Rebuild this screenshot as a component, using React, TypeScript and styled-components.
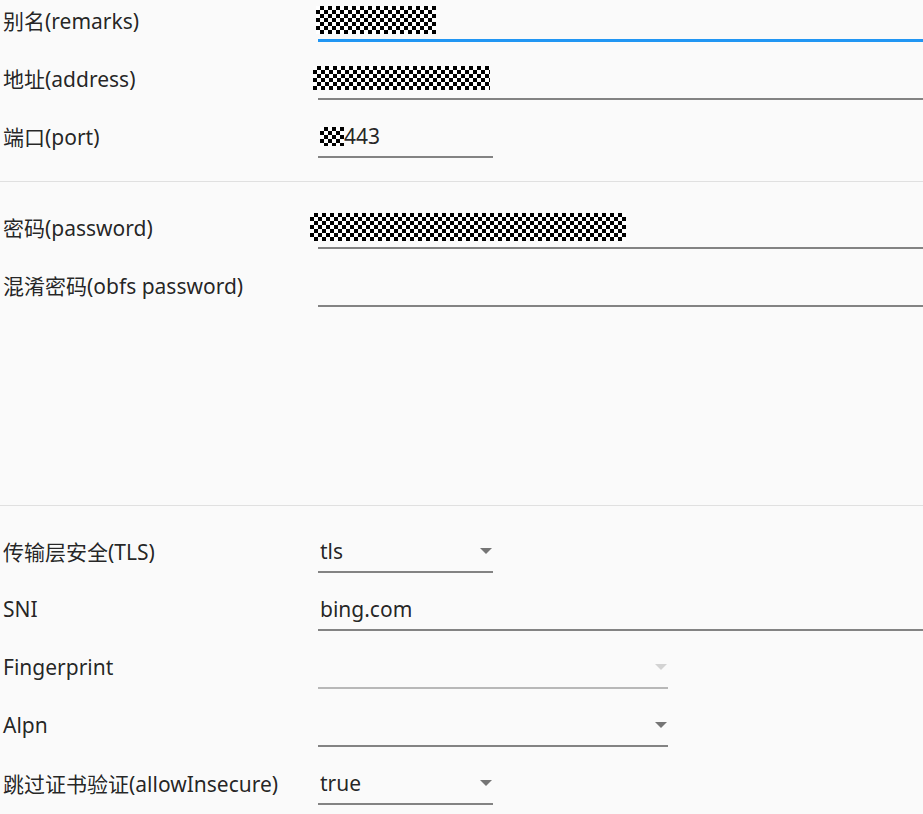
import React from "react";
import styled, { createGlobalStyle } from "styled-components";

const GlobalStyle = createGlobalStyle`
  html, body { margin: 0; padding: 0; background: #fafafa; }
  body { font-family: "Noto Sans", "Noto Sans CJK SC", sans-serif; overflow: hidden; }
`;

const Page = styled.div`
  margin-top: -25px;
  width: 923px;
`;

const Section = styled.section<{ $spacer?: number }>`
  padding: 16px 0 ${(p) => 16 + (p.$spacer ?? 0)}px;
  border-bottom: 1px solid #e0e0e0;
  &:last-child { border-bottom: none; }
`;

const Row = styled.div`
  display: grid;
  grid-template-columns: 318px 1fr;
  height: 58px;
  align-items: center;
`;

const Label = styled.div`
  padding-left: 3px;
  font-size: 21px;
  color: rgba(0, 0, 0, 0.87);
  white-space: nowrap;
`;

const Field = styled.div<{ $width?: number; $focused?: boolean; $disabled?: boolean }>`
  align-self: start;
  position: relative;
  box-sizing: border-box;
  height: 51px;
  width: ${(p) => (p.$width ? `${p.$width}px` : "100%")};
  padding-top: 9px;
  display: flex;
  align-items: center;
  border-bottom: ${(p) =>
    p.$focused ? "3px solid #2196f3" : p.$disabled ? "2px solid #b8b8b8" : "2px solid #838383"};
  font-size: 21px;
  color: rgba(0, 0, 0, 0.87);
`;

const Value = styled.span`
  padding-left: 2px;
  white-space: nowrap;
`;

const Redact = styled.span<{ $w: number; $h: number; $shift?: number }>`
  display: inline-block;
  width: ${(p) => p.$w}px;
  height: ${(p) => p.$h}px;
  margin-left: ${(p) => p.$shift ?? 0}px;
  background: repeating-conic-gradient(#000 0 25%, #fff 0 50%) 0 0 / 8px 8px;
`;

const Arrow = styled.svg<{ $disabled?: boolean }>`
  position: absolute;
  right: 1px;
  top: 26px;
  width: 12px;
  height: 6px;
  fill: ${(p) => (p.$disabled ? "#d3d3d3" : "#757575")};
`;

const Caret = ({ disabled }: { disabled?: boolean }) => (
  <Arrow $disabled={disabled} viewBox="0 0 12 6">
    <path d="M0 0 L12 0 L6 6 Z" />
  </Arrow>
);

export default function App() {
  return (
    <>
      <GlobalStyle />
      <Page>
        <Section>
          <Row>
            <Label>别名(remarks)</Label>
            <Field $focused>
              <Redact $w={120} $h={28} $shift={-2} />
            </Field>
          </Row>
          <Row>
            <Label>地址(address)</Label>
            <Field>
              <Redact $w={177} $h={24} $shift={-5} />
            </Field>
          </Row>
          <Row>
            <Label>端口(port)</Label>
            <Field $width={175}>
              <Redact $w={24} $h={19} $shift={2} />
              <span>443</span>
            </Field>
          </Row>
        </Section>
        <Section $spacer={175}>
          <Row>
            <Label>密码(password)</Label>
            <Field>
              <Redact $w={316} $h={28} $shift={-8} />
            </Field>
          </Row>
          <Row>
            <Label>混淆密码(obfs password)</Label>
            <Field />
          </Row>
        </Section>
        <Section>
          <Row>
            <Label>传输层安全(TLS)</Label>
            <Field $width={175}>
              <Value>tls</Value>
              <Caret />
            </Field>
          </Row>
          <Row>
            <Label>SNI</Label>
            <Field>
              <Value>bing.com</Value>
            </Field>
          </Row>
          <Row>
            <Label>Fingerprint</Label>
            <Field $width={350} $disabled>
              <Caret disabled />
            </Field>
          </Row>
          <Row>
            <Label>Alpn</Label>
            <Field $width={350}>
              <Caret />
            </Field>
          </Row>
          <Row>
            <Label>跳过证书验证(allowInsecure)</Label>
            <Field $width={175}>
              <Value>true</Value>
              <Caret />
            </Field>
          </Row>
        </Section>
      </Page>
    </>
  );
}
